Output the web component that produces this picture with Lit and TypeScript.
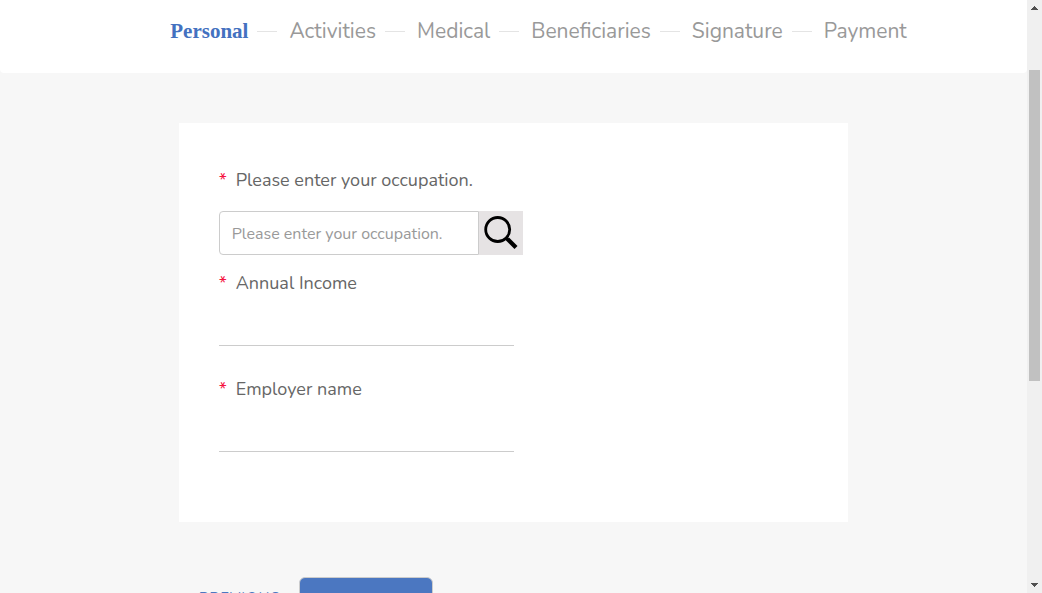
import { LitElement, html, css } from "lit";
import { customElement, property } from "lit/decorators.js";

@customElement("form-steps")
export class FormSteps extends LitElement {
  @property({ type: Array }) steps: string[] = [];
  @property() current = "";

  static styles = css`
    :host {
      display: block;
    }
    .steps {
      display: flex;
      align-items: center;
      list-style: none;
      margin: 0;
      padding: 0;
      font-size: 21px;
      line-height: 30px;
      font-weight: 400;
    }
    .step {
      display: flex;
      align-items: center;
    }
    .step + .step::before {
      content: "";
      width: 20px;
      height: 1px;
      margin: 0 12px 0 9px;
      background: #e4e4e4;
    }
    .link {
      color: #999;
      text-decoration: none;
      white-space: nowrap;
    }
    .current {
      color: #4371c0;
      font-family: "Liberation Serif", serif;
      font-weight: 700;
    }
  `;

  render() {
    return html`<ol class="steps">
      ${this.steps.map(
        (step) => html`<li class="step">
          <a
            class="link ${step === this.current ? "current" : ""}"
            href="#${step.toLowerCase()}"
            aria-current=${step === this.current ? "step" : "false"}
            >${step}</a
          >
        </li>`
      )}
    </ol>`;
  }
}

@customElement("scroll-track")
export class ScrollTrack extends LitElement {
  static styles = css`
    :host {
      display: grid;
      grid-template-rows: 16px 54fr 311fr 196fr 16px;
      justify-items: center;
      align-items: center;
      background: #f0f0f0;
    }
    .thumb {
      grid-row: 3;
      width: 11px;
      height: 100%;
      background: #c1c1c1;
    }
    .arrow {
      display: block;
      width: 7px;
      height: 4px;
      fill: #505050;
    }
    .down {
      grid-row: 5;
    }
  `;

  render() {
    return html`
      <svg class="arrow" viewBox="0 0 7 4" aria-hidden="true"><path d="M3 0h1v1h1v1h1v1h1v1H0V3h1V2h1V1h1z" /></svg>
      <div class="thumb"></div>
      <svg class="arrow down" viewBox="0 0 7 4" aria-hidden="true"><path d="M0 0h7v1H6v1H5v1H4v1H3V3H2V2H1V1H0z" /></svg>
    `;
  }
}

@customElement("app-root")
export class AppRoot extends LitElement {
  private steps = ["Personal", "Activities", "Medical", "Beneficiaries", "Signature", "Payment"];

  static styles = css`
    :host {
      display: grid;
      grid-template-columns: minmax(0, 1fr) 15px;
      height: 100vh;
      overflow: hidden;
      font-family: Nunito, Lato, sans-serif;
      color: #666;
      background: #f7f7f7;
    }
    .page {
      min-height: 0;
      overflow: hidden;
    }
    .header {
      display: flex;
      justify-content: center;
      padding: 16px 0 27px 50px;
      background: #fff;
      border-radius: 0 0 4px 4px;
    }
    .content {
      width: 65.2%;
      margin: 50px auto 0;
    }
    .card {
      padding: 44px 40px 70px;
      background: #fff;
    }
    .label {
      display: flex;
      gap: 10px;
      font-size: 18px;
      line-height: 26px;
    }
    .required {
      color: #f5123f;
      width: 7px;
    }
    .search {
      display: flex;
      width: 304px;
      height: 44px;
      margin: 18px 0 15px;
    }
    .input {
      box-sizing: border-box;
      width: 260px;
      padding: 1px 12px 0;
      border: 1px solid #ccc;
      border-radius: 4px 0 0 4px;
      background: #fff;
      color: #666;
      font: 16px Nunito, Lato, sans-serif;
    }
    .input::placeholder {
      color: #999;
      opacity: 1;
    }
    .find {
      display: grid;
      place-items: center;
      width: 44px;
      padding: 0;
      border: 0;
      background: #e6e3e4;
    }
    .icon {
      display: block;
      width: 44px;
      height: 44px;
      fill: none;
      stroke: #000;
    }
    .line {
      display: block;
      box-sizing: border-box;
      width: 295px;
      height: 44px;
      margin: 6px 0 30px;
      padding: 0 12px;
      border: 0;
      border-bottom: 1px solid #ccc;
      background: #fff;
      color: #666;
      font: 16px Nunito, Lato, sans-serif;
    }
    .line:last-child {
      margin-bottom: 0;
    }
    .actions {
      display: flex;
      align-items: start;
      gap: 18px;
      margin-top: 55px;
      padding-left: 20px;
    }
    .previous {
      width: 82px;
      padding: 11px 0;
      border: 0;
      background: none;
      color: #4b77c1;
      font: 400 15px/20px Nunito, Lato, sans-serif;
      letter-spacing: 1px;
      text-align: left;
      white-space: nowrap;
    }
    .next {
      width: 134px;
      height: 48px;
      border: 1px solid #ccc;
      border-radius: 6px;
      background: #4b77c1;
    }
  `;

  render() {
    return html`
      <div class="page">
        <header class="header">
          <nav aria-label="Application steps">
            <form-steps .steps=${this.steps} current="Personal"></form-steps>
          </nav>
        </header>
        <main class="content">
          <form class="card">
            <label class="label" for="occupation"><span class="required">*</span>Please enter your occupation.</label>
            <div class="search">
              <input class="input" id="occupation" type="text" placeholder="Please enter your occupation." required />
              <button class="find" type="button" aria-label="Search occupations">
                <svg class="icon" viewBox="0 0 44 44" aria-hidden="true">
                  <circle cx="18.7" cy="18.5" r="12" stroke-width="2.8" />
                  <path d="M27 27l2 2" stroke-width="3" />
                  <path d="M28.5 28L37 36.5" stroke-width="4.2" />
                </svg>
              </button>
            </div>
            <label class="label" for="income"><span class="required">*</span>Annual Income</label>
            <input class="line" id="income" type="text" required />
            <label class="label" for="employer"><span class="required">*</span>Employer name</label>
            <input class="line" id="employer" type="text" required />
          </form>
          <div class="actions">
            <button class="previous" type="button">PREVIOUS</button>
            <button class="next" type="button" aria-label="Next"></button>
          </div>
        </main>
      </div>
      <scroll-track></scroll-track>
    `;
  }
}
